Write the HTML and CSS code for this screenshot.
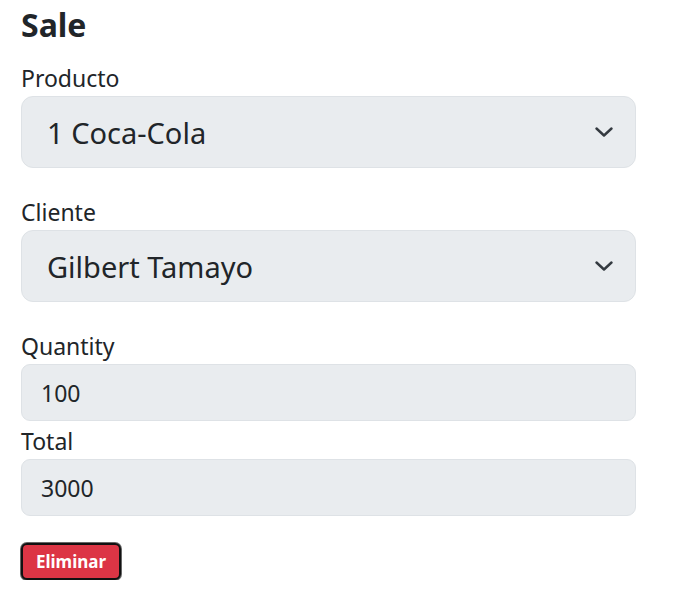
FILE: index.html
```html
<!DOCTYPE html>
<html lang="es">
<head>
<meta charset="utf-8">
<title>Sale</title>
<link rel="stylesheet" href="styles.css">
</head>
<body>
<main class="page">
  <h1 class="title">Sale</h1>
  <form class="form">
    <div class="group">
      <label class="label">Producto</label>
      <div class="select">
        <span>1 Coca-Cola</span>
        <svg class="chev" viewBox="0 0 18 10" width="18" height="10"><path d="M1.5 1.5l7.5 7 7.5-7" fill="none" stroke="#343a40" stroke-width="2.4" stroke-linecap="round" stroke-linejoin="round"/></svg>
      </div>
    </div>
    <div class="group">
      <label class="label">Cliente</label>
      <div class="select">
        <span>Gilbert Tamayo</span>
        <svg class="chev" viewBox="0 0 18 10" width="18" height="10"><path d="M1.5 1.5l7.5 7 7.5-7" fill="none" stroke="#343a40" stroke-width="2.4" stroke-linecap="round" stroke-linejoin="round"/></svg>
      </div>
    </div>
    <div class="group">
      <label class="label">Quantity</label>
      <div class="input">100</div>
      <label class="label label-next">Total</label>
      <div class="input">3000</div>
    </div>
    <div class="actions">
      <button type="button" class="btn-danger">Eliminar</button>
    </div>
  </form>
</main>
</body>
</html>
```
FILE: styles.css
```css
html, body {
  margin: 0;
  padding: 0;
  background: #fff;
}
body {
  font-family: "Noto Sans", "Open Sans", sans-serif;
  color: #212529;
}
.page {
  width: 615px;
  padding-left: 21px;
  padding-top: 1px;
}
.title {
  margin: 0 0 11px 0;
  font-size: 32px;
  line-height: 48px;
  font-weight: 700;
}
.form {
  display: flex;
  flex-direction: column;
}
.group {
  display: flex;
  flex-direction: column;
  margin-bottom: 26px;
}
.label {
  display: block;
  font-size: 23px;
  line-height: 36px;
}
.label-next {
  margin-top: 2px;
}
.select {
  box-sizing: border-box;
  height: 72px;
  display: flex;
  align-items: center;
  justify-content: space-between;
  padding: 0 22px 0 25px;
  background: #e9ecef;
  border: 1px solid #dee2e6;
  border-radius: 12px;
  font-size: 29px;
}
.chev {
  width: 18px;
  height: 10px;
}
.input {
  box-sizing: border-box;
  height: 57px;
  display: flex;
  align-items: center;
  padding: 0 19px;
  background: #e9ecef;
  border: 1px solid #dee2e6;
  border-radius: 9px;
  font-size: 23px;
}
.actions {
  display: flex;
  margin-top: 1px;
}
.btn-danger {
  box-sizing: border-box;
  width: 100px;
  height: 37px;
  background: #dc3545;
  color: #fff;
  border: 2px solid #111;
  box-shadow: 0 0 0 1px #666;
  border-radius: 6px;
  font-family: "Noto Sans", sans-serif;
  font-weight: 700;
  font-size: 17px;
  padding: 0;
  cursor: pointer;
}
```
